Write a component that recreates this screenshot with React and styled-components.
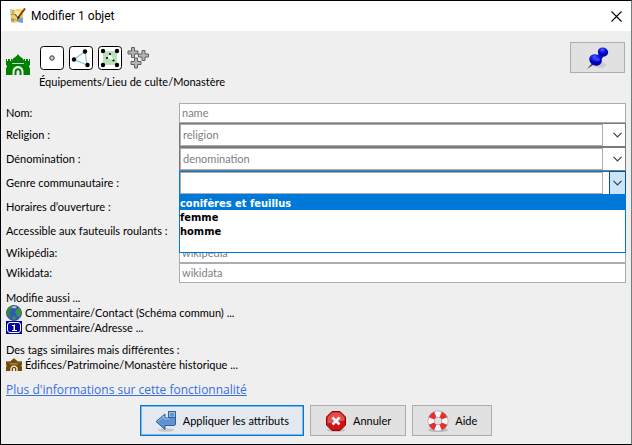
import React from "react";
import styled, { createGlobalStyle, css } from "styled-components";

const ui = 'Lato, "Liberation Sans", sans-serif';
const bold = '"DejaVu Sans Condensed", "DejaVu Sans", sans-serif';

const GlobalStyle = createGlobalStyle`
  *, *::before, *::after { box-sizing: border-box; }
  body { margin: 0; background: #efefef; font: 11px/14px ${ui}; color: #000; }
  button, input, select { font: inherit; color: inherit; margin: 0; border-radius: 0; }
  svg { display: block; flex: none; }
`;

const Dialog = styled.main`
  display: flex;
  flex-direction: column;
  min-height: 100vh;
  background: #efefef;
  border: 1px solid #000;
  border-right-color: #6d8185;
`;

const TitleBar = styled.header`
  display: flex;
  align-items: center;
  height: 30px;
  padding: 0 9px 0 8px;
  background: #fff;
`;

const Title = styled.h1`
  flex: 1;
  margin: 0 0 0 5px;
  font: 12px/16px Roboto, sans-serif;
`;

const CloseButton = styled.button`
  display: grid;
  place-items: center;
  width: 12px;
  height: 12px;
  padding: 0;
  border: 0;
  background: none;
`;

const Content = styled.div`
  display: flex;
  flex-direction: column;
  padding: 11px 5px 7px;
`;

const Header = styled.div`
  display: flex;
  align-items: flex-start;
  height: 61px;
`;

const PresetIcon = styled.div`
  width: 24px;
  margin: 12px 9px 0 0;
`;

const HeaderMain = styled.div`
  flex: 1;
  padding-top: 4px;
`;

const TypeIcons = styled.div`
  display: flex;
  gap: 5px;
  margin: 0 0 5px 1px;
`;

const Button = styled.button`
  display: flex;
  align-items: center;
  justify-content: center;
  gap: 6px;
  height: 31px;
  padding: 0 14px;
  border: 1px solid #adadad;
  background: #e1e1e1;
  ${(p) => p.$primary && css`
    border: 1px solid #0078d7;
    box-shadow: inset 0 0 0 1px #7db8e8;
    background: #e4e9f0;
  `}
`;

const PinButton = styled(Button)`
  width: 55px;
  margin-right: 1px;
`;

const Form = styled.form`
  display: flex;
  flex-direction: column;
`;

const Row = styled.div`
  display: grid;
  grid-template-columns: 173px 1fr;
  align-items: center;
`;

const Label = styled.label`
  white-space: nowrap;
`;

const TextField = styled.input`
  width: 100%;
  height: 20px;
  padding: 0 2px 2px;
  border: 1px solid #abadb3;
  background: #fff;
  outline: 0;
  &::placeholder { color: #808080; opacity: 1; }
`;

const ComboBox = styled.div`
  position: relative;
  display: flex;
  justify-content: space-between;
  height: 24px;
  border: 1px solid ${(p) => (p.$open ? "#0078d7" : "#7a7a7a")};
  background: #fff;
`;

const ComboField = styled(TextField)`
  flex: 1;
  min-width: 0;
  height: 22px;
`;

const ComboArea = styled.span`
  display: flex;
  justify-content: flex-end;
  width: 22px;
`;

const ComboButton = styled.button`
  display: grid;
  place-items: center;
  width: 17px;
  height: 24px;
  margin: -1px -1px 0 0;
  padding: 0;
  border: 1px solid ${(p) => (p.$open ? "#005499" : "#7a7a7a")};
  border-left-color: ${(p) => (p.$open ? "#005499" : "transparent")};
  background: ${(p) => (p.$open ? "#cce4f7" : "transparent")};
`;

const Popup = styled.ul`
  position: absolute;
  z-index: 2;
  top: 22px;
  left: -1px;
  right: -1px;
  height: 59px;
  margin: 0;
  padding: 0;
  list-style: none;
  border: 1px solid #0078d7;
  background: #fff;
  font-family: ${bold};
  font-weight: bold;
`;

const Option = styled.li`
  height: 14px;
  line-height: 15px;
  ${(p) => p["aria-selected"] && css`
    height: 15px;
    padding-top: 1px;
    color: #fff;
    background: #0078d7;
  `}
`;

const Select = styled.select`
  height: 24px;
  border: 1px solid #7a7a7a;
  background: #fff;
`;

const Related = styled.section`
  margin-top: 7px;
`;

const Heading = styled.p`
  margin: 0;
  line-height: 15px;
`;

const PresetLink = styled.a`
  display: flex;
  align-items: center;
  gap: 3px;
  height: 15px;
  color: #000;
  text-decoration: none;
`;

const MoreLink = styled.a`
  align-self: flex-start;
  margin-top: 10px;
  font: 12px/16px "Open Sans", "Noto Sans", sans-serif;
  color: #386fe0;
`;

const Footer = styled.footer`
  display: flex;
  justify-content: center;
  gap: 6px;
`;

const Castle = ({ width, height, color }) => (
  <svg width={width} height={height} viewBox="0 0 24 21" preserveAspectRatio="none" aria-hidden="true">
    <path d="M0 5h1v2h1V5h2v2h1V5h1v2c0-3 4-3.500 6-7 2 3.500 6 4 6 7V5h1v2h1V5h2v2h1V5h1v6l-1 1v1l1 1v7H0v-7l1-1v-1l-1-1z" fill={color} />
    <path d="M6 9.500h12" stroke="#efefef" strokeWidth=".8" />
    <path d="M6.500 21v-3c0-8 11-8 11 0v3z" fill="#efefef" />
    <path d="M8.500 21v-3c0-5 7-5 7 0v3z" fill={color} />
    <path d="M10.500 21v-3c0-2.500 3-2.500 3 0v3z" fill="#efefef" />
  </svg>
);

const Frame = ({ children }) => (
  <svg width="24" height="24" viewBox="0 0 24 24" aria-hidden="true">
    <rect x=".5" y=".5" width="23" height="23" rx="3" fill="#fff" stroke="#000" />
    {children}
  </svg>
);

const NodeIcon = () => (
  <Frame><circle cx="12" cy="12" r="2.200" fill="#bde5bd" stroke="#333" /></Frame>
);

const WayIcon = () => (
  <Frame>
    <path d="M18 19 5 13.500 16 5.500l2 13" fill="none" stroke="#8fc5d8" strokeWidth="1.300" />
    <circle cx="5" cy="13.500" r="2.200" /><circle cx="16" cy="5.500" r="2.200" /><circle cx="18.500" cy="19" r="2.200" />
  </Frame>
);

const AreaIcon = () => (
  <Frame>
    <path d="M5 5h14v14H5z" fill="#b9e2b9" />
    <path d="m9 12 3-4 4 6z" fill="#fff" />
    <circle cx="5" cy="5" r="2.200" /><circle cx="19" cy="5" r="2.200" /><circle cx="5" cy="19" r="2.200" /><circle cx="19" cy="19" r="2.200" />
    <circle cx="12" cy="8" r="1.100" /><circle cx="9" cy="12" r="1.100" /><circle cx="15.500" cy="14.500" r="1.100" />
  </Frame>
);

const RelationIcon = () => (
  <svg width="24" height="24" viewBox="0 0 24 24" aria-hidden="true">
    <defs>
      <path id="plus" d="M-1.500-5h3v3.500h3.500v3h-3.500v3.500h-3v-3.500h-3.500v-3h3.500z" fill="#b4b4b4" stroke="#606060" strokeLinejoin="round" />
    </defs>
    <use href="#plus" x="6" y="6.500" /><use href="#plus" x="16.500" y="9.500" /><use href="#plus" x="9" y="17" />
  </svg>
);

const AppIcon = () => (
  <svg width="17" height="16" viewBox="0 0 17 16" aria-hidden="true">
    <path d="m1 1 4 1 4-1 5 1v13l-5-1-4 1-3-1z" fill="#f3cf58" />
    <path d="m1 1 4 1v6L2 9z" fill="#b8dba5" />
    <path d="M6 3h5l-1 5H6z" fill="#f4e9b0" />
    <path d="m8 12 6-3v6l-5-1zM2 10l3 1v3l-3-1z" fill="#6fa5df" />
    <path d="M2 7c3-3 4 2 6 0M3 13c3-4 4 1 6-1M4 2v5" fill="none" stroke="#d98532" />
    <path d="M16 .500 9 10" stroke="#8c3b17" strokeWidth="2" />
    <path d="m6 6 3 4" stroke="#4e4a44" />
    <path d="m9 8-1 4 3-2z" fill="#332b24" />
  </svg>
);

const PinIcon = () => (
  <svg width="24" height="24" viewBox="0 0 24 24" aria-hidden="true">
    <defs>
      <radialGradient id="pin" cx=".35" cy=".3"><stop offset="0" stopColor="#5b68ff" /><stop offset=".5" stopColor="#1720e8" /><stop offset="1" stopColor="#0000b4" /></radialGradient>
    </defs>
    <ellipse cx="14" cy="19" rx="6" ry="3" fill="#cdcdcd" />
    <path d="m1 23 5-6 2 1.500z" fill="#555" />
    <path d="m11 10 3-4 4 4-4 5z" fill="#0a10cc" />
    <ellipse cx="9.500" cy="14" rx="6.500" ry="5.500" transform="rotate(25 9.500 14)" fill="url(#pin)" />
    <ellipse cx="11" cy="13" rx="3" ry="2" transform="rotate(25 11 13)" fill="#3140ff" />
    <ellipse cx="17" cy="6" rx="5.200" ry="4.500" transform="rotate(20 17 6)" fill="url(#pin)" />
  </svg>
);

const GlobeIcon = () => (
  <svg width="16" height="16" viewBox="0 0 16 16" aria-hidden="true">
    <circle cx="8" cy="8" r="7.500" fill="#3455c4" stroke="#4a5a78" />
    <path d="M1 5c1-3 4-4.500 6-4.500L6 3l-1 3-2 1 2 3-1 2C1 11 0 8 1 5z" fill="#2b8b3c" />
    <path d="m10 5 3-2c2 2 3 4 2 6l-2 3-2-1-1-2-1-2z" fill="#37983e" />
    <path d="m6 12 3-1 1 3-3 1z" fill="#37983e" />
    <path d="M5 2.500 8 1l3 1-2 1.500z" fill="#b7ccd2" />
  </svg>
);

const AddressIcon = () => (
  <svg width="16" height="13" viewBox="0 0 16 13" aria-hidden="true">
    <path d="M0 0h16v13H0z" fill="#00009c" />
    <rect x="1.500" y="1.500" width="13" height="10" rx="2.500" fill="none" stroke="#fff" />
    <path d="M6 4.500h2V9M6 9.500h5M8.500 3.500v6" fill="none" stroke="#fff" />
  </svg>
);

const ApplyIcon = () => (
  <svg width="22" height="22" viewBox="0 0 22 22" aria-hidden="true">
    <ellipse cx="11" cy="20" rx="8" ry="1.800" fill="#c5cad0" />
    <path d="M13.500 1.500h7V14c0 1-.6 1.500-1.500 1.500h-9v4L1 11.500l9-7.500v4h3.500z" fill="#5f92cf" stroke="#2f5f9c" />
    <path d="M14.500 2.500h5V7h-5zM9 6v3h5.500M2.500 11.500 9 6" fill="none" stroke="#9fc0e6" />
    <path d="M13.500 1.500v6h7" fill="none" stroke="#2f5f9c" />
  </svg>
);

const CancelIcon = () => (
  <svg width="22" height="22" viewBox="0 0 22 22" aria-hidden="true">
    <ellipse cx="11" cy="20" rx="9" ry="2" fill="#c2c2c2" />
    <path d="M7 1.500h8l5.500 5.500v8L15 20.500H7L1.500 15V7z" fill="#cc1212" stroke="#8f0000" />
    <path d="M7.500 2.500h7l5 5v3l-17 3V7.500z" fill="#df5050" />
    <path d="m7.500 7.500 7 7m0-7-7 7" stroke="#f4f4f4" strokeWidth="2.600" />
  </svg>
);

const HelpIcon = () => (
  <svg width="22" height="22" viewBox="0 0 22 22" aria-hidden="true">
    <ellipse cx="11" cy="20" rx="10" ry="2" fill="#bcbcbc" />
    <circle cx="11" cy="11" r="7" fill="none" stroke="#a8a8a8" strokeWidth="7" />
    <circle cx="11" cy="11" r="7" fill="none" stroke="#f8f8f8" strokeWidth="5.600" />
    <circle cx="11" cy="11" r="7" fill="none" stroke="#e33131" strokeWidth="6" pathLength="8" strokeDasharray="1 1" strokeDashoffset="-.5" />
  </svg>
);

const Chevron = () => (
  <svg width="9" height="6" viewBox="0 0 9 6" fill="none" aria-hidden="true">
    <path d="m.5.8 4 4 4-4" stroke="#404040" strokeWidth="1.200" />
  </svg>
);

const genders = ["conifères et feuillus", "femme", "homme"];

function TextRow({ id, label, placeholder }) {
  return (
    <Row>
      <Label htmlFor={id}>{label}</Label>
      <TextField id={id} placeholder={placeholder} />
    </Row>
  );
}

function ComboRow({ id, label, placeholder, options }) {
  return (
    <Row>
      <Label htmlFor={id}>{label}</Label>
      <ComboBox $open={!!options}>
        <ComboField id={id} placeholder={placeholder} role="combobox" aria-expanded={!!options} aria-controls={options ? `${id}-list` : undefined} />
        <ComboArea>
          <ComboButton type="button" $open={!!options} aria-label={label}><Chevron /></ComboButton>
        </ComboArea>
        {options && (
          <Popup id={`${id}-list`} role="listbox">
            {options.map((o, i) => <Option key={o} role="option" aria-selected={i === 0}>{o}</Option>)}
          </Popup>
        )}
      </ComboBox>
    </Row>
  );
}

export default function App() {
  return (
    <>
      <GlobalStyle />
      <Dialog>
        <TitleBar>
          <AppIcon />
          <Title>Modifier 1 objet</Title>
          <CloseButton aria-label="Fermer">
            <svg width="11" height="11" viewBox="0 0 11 11" aria-hidden="true"><path d="m.5.500 10 10m0-10-10 10" stroke="#000" strokeWidth="1.100" /></svg>
          </CloseButton>
        </TitleBar>
        <Content>
          <Header>
            <PresetIcon><Castle width={24} height={21} color="#008000" /></PresetIcon>
            <HeaderMain>
              <TypeIcons><NodeIcon /><WayIcon /><AreaIcon /><RelationIcon /></TypeIcons>
              <span>Équipements/Lieu de culte/Monastère</span>
            </HeaderMain>
            <PinButton aria-label="Épingler"><PinIcon /></PinButton>
          </Header>
          <Form>
            <TextRow id="name" label="Nom:" placeholder="name" />
            <ComboRow id="religion" label="Religion :" placeholder="religion" />
            <ComboRow id="denomination" label="Dénomination :" placeholder="denomination" />
            <ComboRow id="gender" label="Genre communautaire :" options={genders} />
            <ComboRow id="hours" label="Horaires d’ouverture :" />
            <Row>
              <Label htmlFor="wheelchair">Accessible aux fauteuils roulants :</Label>
              <Select id="wheelchair" />
            </Row>
            <TextRow id="wikipedia" label="Wikipédia:" placeholder="wikipedia" />
            <TextRow id="wikidata" label="Wikidata:" placeholder="wikidata" />
          </Form>
          <Related>
            <Heading>Modifie aussi ...</Heading>
            <PresetLink href="#contact"><GlobeIcon />Commentaire/Contact (Schéma commun) ...</PresetLink>
            <PresetLink href="#adresse"><AddressIcon />Commentaire/Adresse ...</PresetLink>
          </Related>
          <Related>
            <Heading>Des tags similaires mais différentes :</Heading>
            <PresetLink href="#historique"><Castle width={16} height={13} color="#734a08" />Édifices/Patrimoine/Monastère historique ...</PresetLink>
          </Related>
          <MoreLink href="#infos">Plus d'informations sur cette fonctionnalité</MoreLink>
        </Content>
        <Footer>
          <Button $primary><ApplyIcon />Appliquer les attributs</Button>
          <Button><CancelIcon />Annuler</Button>
          <Button><HelpIcon />Aide</Button>
        </Footer>
      </Dialog>
    </>
  );
}
